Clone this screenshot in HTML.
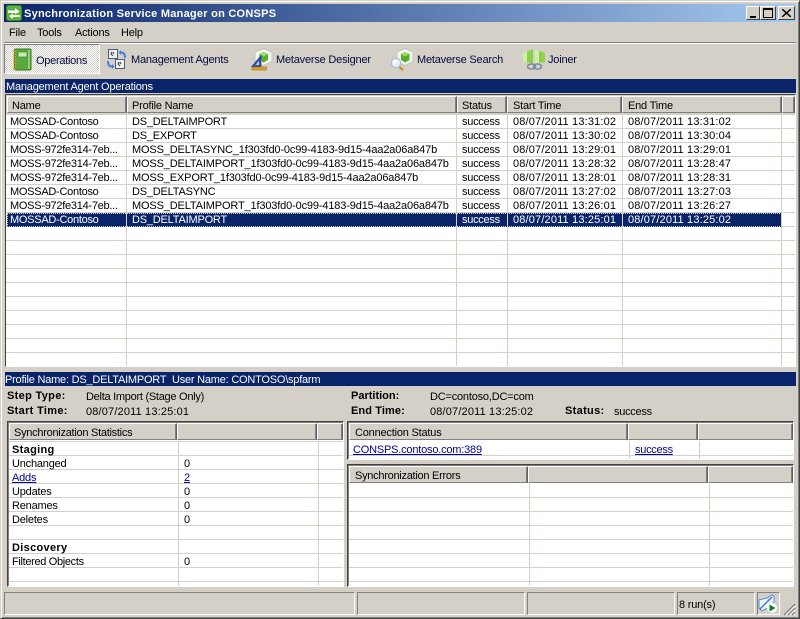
<!DOCTYPE html>
<html><head><meta charset="utf-8"><style>
html,body{margin:0;padding:0;width:800px;height:619px;overflow:hidden;background:#d4d0c8}
body{position:relative;font:11px/14px "Liberation Sans",sans-serif;color:#000;letter-spacing:-.2px}
div,span,a,svg{position:absolute;display:block}
.t,a{white-space:nowrap;height:14px}
a{color:#00009c;text-decoration:underline}
b{font-weight:bold;letter-spacing:.32px}
.d{letter-spacing:.16px}
.p{letter-spacing:-.15px}
.n{letter-spacing:-.27px}
.hd{background:#d4d0c8;border:1px solid;border-color:#fff #606060 #808080 #fff;box-shadow:inset -1px 0 0 #808080;box-sizing:border-box;height:17px}
.navy{background:#0a246a;color:#fff;height:14px;left:5px;width:791px;line-height:14px}
.sunk{box-sizing:border-box;border:1px solid;border-color:#404040 #fff #fff #404040;box-shadow:inset 1px 1px 0 #808080,1px 1px 0 #d4d0c8;background:#fff;overflow:hidden}
.v{width:1px;background:#d4d0c8;top:0;bottom:0}
.sb{box-sizing:border-box;border:1px solid;border-color:#808080 #fff #fff #808080;top:592px;height:23px}
.btn{top:6px;height:14px;box-sizing:border-box;background:#d4d0c8;border:1px solid;border-color:#fff #404040 #404040 #fff}
</style></head><body>
<div style="left:0;top:0;width:800px;height:619px;box-sizing:border-box;border:1px solid;border-color:#d4d0c8 #404040 #404040 #d4d0c8;box-shadow:inset 1px 1px 0 #fff,inset -1px -1px 0 #808080"></div>
<div style="left:4px;top:4px;width:792px;height:18px;background:linear-gradient(90deg,#0a246a,#a6caf0)"></div>
<svg style="left:6px;top:5px" width="16" height="16" viewBox="0 0 16 16"><rect x=".5" y=".5" width="15" height="15" rx="2" fill="#5cb040" stroke="#3a8a28"/><path d="M2 5.500h7V3l4.500 3.500L9 9.500V8H2z" fill="#fff"/><path d="M14 10H7V8.500L3 11l4 3v-2h7z" fill="#f0f8e0"/></svg>
<span class="t" style="left:24px;top:7px;color:#fff;font-weight:bold;letter-spacing:.25px">Synchronization Service Manager on CONSPS</span>
<div class="btn" style="left:746px;width:14px"><div style="left:3px;top:9px;width:6px;height:2px;background:#000"></div></div>
<div class="btn" style="left:760px;width:16px"><div style="left:2px;top:1px;width:10px;height:10px;box-sizing:border-box;border:1px solid #000;border-top-width:2px"></div></div>
<div class="btn" style="left:778px;width:17px"><svg style="left:3px;top:2px" width="9" height="8" viewBox="0 0 9 8"><path d="M0 0l9 8M9 0L0 8" stroke="#000" stroke-width="1.500"/></svg></div>

<span class="t" style="left:9px;top:26px">File</span>
<span class="t" style="left:37px;top:26px">Tools</span>
<span class="t" style="left:75px;top:26px">Actions</span>
<span class="t" style="left:121px;top:26px">Help</span>
<div style="left:4px;top:42px;width:792px;height:1px;background:#808080"></div>
<div style="left:4px;top:43px;width:792px;height:1px;background:#fff"></div>

<div style="left:4px;top:44px;width:96px;height:30px;box-sizing:border-box;border:1px solid;border-color:#808080 #fff #fff #808080;background:repeating-conic-gradient(#fff 0 25%,#d4d0c8 0 50%) 0 0/2px 2px"></div>
<svg style="left:12px;top:48px" width="20" height="23" viewBox="0 0 20 23"><rect x="2.500" y="1" width="16.500" height="21" rx="1.500" fill="#5aa83f" stroke="#2f7a22"/><rect x="16" y="2" width="2" height="19" fill="#90cc70"/><rect x="6" y="4" width="9" height="5" fill="#c8e6b0" stroke="#2f7a22" stroke-width=".6"/><path d="M1 3h3M1 6h3M1 9h3M1 12h3M1 15h3M1 18h3M1 21h3" stroke="#d9a520" stroke-width="1.200"/></svg>
<span class="t n" style="left:36px;top:54px;color:#000a40">Operations</span>

<svg style="left:106px;top:48px" width="21" height="23" viewBox="0 0 21 23"><rect x="2.500" y="1.500" width="9" height="9" fill="#eef0f4" stroke="#4a5a7a"/><rect x="9.500" y="11.500" width="9" height="9" fill="#eef0f4" stroke="#4a5a7a"/><path d="M5 4l1 1-1 1 2 2M7 4l1 2M12 14l1 1-1 1 2 2M14 14l1 2" stroke="#444" fill="none"/><path d="M15 2l-2.500 2.500L15 7V5.500c2 0 3 1 3 4.500h2c0-5-2-6.500-5-6.500z" fill="#3f7fd8"/><path d="M6 21l2.500-2.500L6 16v1.500c-2 0-3-1-3-4.500H1c0 5 2 6.500 5 6.500z" fill="#3f7fd8"/></svg>
<span class="t" style="left:131px;top:53px;color:#000a40">Management Agents</span>

<svg style="left:251px;top:48px" width="22" height="23" viewBox="0 0 22 23"><path d="M12.500 .5L21 4v9l-8.500 4.500L4 13V4z" fill="#f4f4f0" stroke="#b8b8b0" stroke-width=".7"/><path d="M12.500 4l4.500 2v6l-4.500 2.500L8.500 12V6z" fill="#58ac2c"/><path d="M12.500 4L17 6l-4.500 2.500L8.500 6z" fill="#a0dc64"/><path d="M.5 19L10 7.500V19z" fill="#2f55b8" stroke="#1b3580" stroke-width=".6"/><path d="M4.500 17L8 13v4z" fill="#d4d0c8"/><rect x="1" y="19" width="14.500" height="3" fill="#e0a020" stroke="#9a6a10" stroke-width=".5"/></svg>
<span class="t" style="left:276px;top:53px;color:#000a40">Metaverse Designer</span>

<svg style="left:391px;top:48px" width="24" height="23" viewBox="0 0 24 23"><path d="M14 .5L22 4v9l-8 4.500L6 13V4z" fill="#f4f4f0" stroke="#b8b8b0" stroke-width=".7"/><path d="M14 4l4.500 2v6L14 14.500 10 12V6z" fill="#58ac2c"/><path d="M14 4l4.500 2L14 8.500 10 6z" fill="#a0dc64"/><circle cx="5" cy="15" r="4.700" fill="#e4ecf6" stroke="#a8b4c4"/><circle cx="4" cy="13.500" r="2" fill="#fff"/><path d="M8.500 19l3.500 3" stroke="#d08a20" stroke-width="2.200"/></svg>
<span class="t" style="left:417px;top:53px;color:#000a40">Metaverse Search</span>

<svg style="left:523px;top:48px" width="24" height="23" viewBox="0 0 24 23"><path d="M0 5l10-4v14.500L0 14z" fill="#8ed04a"/><path d="M0 5l4-1.600v11.300L0 14z" fill="#cdf0a8"/><path d="M12 1l10 4v9l-10 1.500z" fill="#8ed04a"/><path d="M12 1l4 1.600v12.300l-4 .6z" fill="#cdf0a8"/><ellipse cx="8.500" cy="18.500" rx="4" ry="2.500" fill="none" stroke="#7a8aa4" stroke-width="1.600"/><ellipse cx="14.500" cy="18.500" rx="4" ry="2.500" fill="none" stroke="#7a8aa4" stroke-width="1.600"/></svg>
<span class="t" style="left:548px;top:53px;color:#000a40">Joiner</span>

<div class="navy" style="top:79px"><span class="t" style="left:1px;top:1px">Management Agent Operations</span></div>

<!-- main list -->
<div class="sunk" style="left:5px;top:94px;width:791px;height:273px">
  <div style="left:0;top:0;right:0;bottom:0;background:repeating-linear-gradient(180deg,#fff 0,#fff 13px,#d4d0c8 13px,#d4d0c8 14px);background-position:0 20px"></div>
  <div style="left:0;right:0;top:0;height:20px;background:#d4d0c8"></div>
</div>
<div class="hd" style="left:7px;top:96px;width:120px"></div><span class="t" style="left:12px;top:99px">Name</span>
<div class="hd" style="left:127px;top:96px;width:330px"></div><span class="t" style="left:132px;top:99px">Profile Name</span>
<div class="hd" style="left:457px;top:96px;width:50px"></div><span class="t" style="left:462px;top:99px">Status</span>
<div class="hd" style="left:507px;top:96px;width:115px"></div><span class="t" style="left:513px;top:99px">Start Time</span>
<div class="hd" style="left:622px;top:96px;width:160px"></div><span class="t" style="left:628px;top:99px">End Time</span>
<div class="hd" style="left:782px;top:96px;width:13px"></div>

<div style="left:7px;top:213px;width:775px;height:14px;background:#0a246a"></div>
<div style="left:7px;top:213px;width:775px;height:14px;box-sizing:border-box;border:1px dotted #d4d0c8"></div>
<div class="v" style="left:126px;top:113px;bottom:auto;height:253px"></div>
<div class="v" style="left:456px;top:113px;bottom:auto;height:253px"></div>
<div class="v" style="left:507px;top:113px;bottom:auto;height:253px"></div>
<div class="v" style="left:622px;top:113px;bottom:auto;height:253px"></div>
<div class="v" style="left:781px;top:113px;bottom:auto;height:253px"></div>

<span class="t n" style="left:10px;top:115px">MOSSAD-Contoso</span><span class="t" style="left:132px;top:115px">DS_DELTAIMPORT</span><span class="t n" style="left:462px;top:115px">success</span><span class="t d" style="left:513px;top:115px">08/07/2011 13:31:02</span><span class="t d" style="left:628px;top:115px">08/07/2011 13:31:02</span>
<span class="t n" style="left:10px;top:129px">MOSSAD-Contoso</span><span class="t" style="left:132px;top:129px">DS_EXPORT</span><span class="t n" style="left:462px;top:129px">success</span><span class="t d" style="left:513px;top:129px">08/07/2011 13:30:02</span><span class="t d" style="left:628px;top:129px">08/07/2011 13:30:04</span>
<span class="t n" style="left:10px;top:143px">MOSS-972fe314-7eb...</span><span class="t p" style="left:132px;top:143px">MOSS_DELTASYNC_1f303fd0-0c99-4183-9d15-4aa2a06a847b</span><span class="t n" style="left:462px;top:143px">success</span><span class="t d" style="left:513px;top:143px">08/07/2011 13:29:01</span><span class="t d" style="left:628px;top:143px">08/07/2011 13:29:01</span>
<span class="t n" style="left:10px;top:157px">MOSS-972fe314-7eb...</span><span class="t p" style="left:132px;top:157px">MOSS_DELTAIMPORT_1f303fd0-0c99-4183-9d15-4aa2a06a847b</span><span class="t n" style="left:462px;top:157px">success</span><span class="t d" style="left:513px;top:157px">08/07/2011 13:28:32</span><span class="t d" style="left:628px;top:157px">08/07/2011 13:28:47</span>
<span class="t n" style="left:10px;top:171px">MOSS-972fe314-7eb...</span><span class="t p" style="left:132px;top:171px">MOSS_EXPORT_1f303fd0-0c99-4183-9d15-4aa2a06a847b</span><span class="t n" style="left:462px;top:171px">success</span><span class="t d" style="left:513px;top:171px">08/07/2011 13:28:01</span><span class="t d" style="left:628px;top:171px">08/07/2011 13:28:31</span>
<span class="t n" style="left:10px;top:185px">MOSSAD-Contoso</span><span class="t" style="left:132px;top:185px">DS_DELTASYNC</span><span class="t n" style="left:462px;top:185px">success</span><span class="t d" style="left:513px;top:185px">08/07/2011 13:27:02</span><span class="t d" style="left:628px;top:185px">08/07/2011 13:27:03</span>
<span class="t n" style="left:10px;top:199px">MOSS-972fe314-7eb...</span><span class="t p" style="left:132px;top:199px">MOSS_DELTAIMPORT_1f303fd0-0c99-4183-9d15-4aa2a06a847b</span><span class="t n" style="left:462px;top:199px">success</span><span class="t d" style="left:513px;top:199px">08/07/2011 13:26:01</span><span class="t d" style="left:628px;top:199px">08/07/2011 13:26:27</span>
<span class="t n" style="left:10px;top:213px;color:#fff">MOSSAD-Contoso</span><span class="t" style="left:132px;top:213px;color:#fff">DS_DELTAIMPORT</span><span class="t n" style="left:462px;top:213px;color:#fff">success</span><span class="t d" style="left:513px;top:213px;color:#fff">08/07/2011 13:25:01</span><span class="t d" style="left:628px;top:213px;color:#fff">08/07/2011 13:25:02</span>

<div class="navy" style="top:372px"><span class="t" style="left:0;top:1px;letter-spacing:-.22px">Profile Name: DS_DELTAIMPORT&nbsp; User Name: CONTOSO\spfarm</span></div>
<b class="t" style="position:absolute;left:7px;top:389px">Step Type:</b>
<b class="t" style="position:absolute;left:7px;top:404px">Start Time:</b>
<span class="t n" style="left:86px;top:390px">Delta Import (Stage Only)</span>
<span class="t d" style="left:86px;top:405px">08/07/2011 13:25:01</span>
<b class="t" style="position:absolute;left:351px;top:389px;letter-spacing:0">Partition:</b>
<b class="t" style="position:absolute;left:351px;top:404px;letter-spacing:.1px">End Time:</b>
<span class="t" style="left:430px;top:390px">DC=contoso,DC=com</span>
<span class="t d" style="left:430px;top:405px">08/07/2011 13:25:02</span>
<b class="t" style="position:absolute;left:565px;top:404px">Status:</b>
<span class="t n" style="left:614px;top:405px">success</span>

<!-- stats -->
<div class="sunk" style="left:7px;top:421px;width:337px;height:166px"></div>
<div style="left:9px;top:441px;width:334px;height:145px;background:linear-gradient(180deg,#fff 13px,#d4d0c8 13px) 0 1px/100% 14px"></div>
<div class="hd" style="left:9px;top:423px;width:168px"></div><span class="t n" style="left:14px;top:426px">Synchronization Statistics</span>
<div class="hd" style="left:177px;top:423px;width:140px"></div>
<div class="hd" style="left:317px;top:423px;width:26px"></div>
<div class="v" style="left:178px;top:441px;bottom:auto;height:145px"></div>
<div class="v" style="left:318px;top:441px;bottom:auto;height:145px"></div>
<b class="t" style="position:absolute;left:12px;top:443px">Staging</b>
<span class="t" style="left:12px;top:457px">Unchanged</span><span class="t" style="left:184px;top:457px">0</span>
<a style="left:12px;top:471px">Adds</a><a style="left:184px;top:471px">2</a>
<span class="t" style="left:12px;top:485px">Updates</span><span class="t" style="left:184px;top:485px">0</span>
<span class="t" style="left:12px;top:499px">Renames</span><span class="t" style="left:184px;top:499px">0</span>
<span class="t" style="left:12px;top:513px">Deletes</span><span class="t" style="left:184px;top:513px">0</span>
<b class="t" style="position:absolute;left:12px;top:541px">Discovery</b>
<span class="t" style="left:12px;top:555px;letter-spacing:-.33px">Filtered Objects</span><span class="t" style="left:184px;top:555px">0</span>

<!-- connection -->
<div class="sunk" style="left:347px;top:421px;width:447px;height:39px"></div>
<div style="left:349px;top:441px;width:444px;height:18px;background:#fff"></div>
<div style="left:349px;top:455px;width:444px;height:1px;background:#d4d0c8"></div>
<div class="hd" style="left:349px;top:423px;width:279px"></div><span class="t" style="left:355px;top:426px">Connection Status</span>
<div class="hd" style="left:628px;top:423px;width:70px"></div>
<div class="hd" style="left:698px;top:423px;width:95px"></div>
<div class="v" style="left:629px;top:441px;bottom:auto;height:18px"></div>
<div class="v" style="left:699px;top:441px;bottom:auto;height:18px"></div>
<a style="left:353px;top:443px">CONSPS.contoso.com:389</a>
<a class="n" style="left:635px;top:443px">success</a>

<!-- errors -->
<div class="sunk" style="left:347px;top:464px;width:447px;height:123px"></div>
<div style="left:349px;top:484px;width:444px;height:102px;background:linear-gradient(180deg,#fff 13px,#d4d0c8 13px) 0 0/100% 14px"></div>
<div class="hd" style="left:349px;top:466px;width:179px"></div><span class="t n" style="left:355px;top:469px">Synchronization Errors</span>
<div class="hd" style="left:528px;top:466px;width:180px"></div>
<div class="hd" style="left:708px;top:466px;width:85px"></div>
<div class="v" style="left:529px;top:484px;bottom:auto;height:102px"></div>
<div class="v" style="left:709px;top:484px;bottom:auto;height:102px"></div>

<!-- status bar -->
<div class="sb" style="left:4px;width:351px"></div>
<div class="sb" style="left:357px;width:168px"></div>
<div class="sb" style="left:527px;width:148px"></div>
<div class="sb" style="left:677px;width:78px"></div>
<div class="sb" style="left:757px;width:23px"></div>
<span class="t" style="left:679px;top:598px">8 run(s)</span>
<svg style="left:758px;top:594px" width="20" height="20" viewBox="0 0 20 20"><path d="M1 6l8-2 5-3 2 1v6l-3 4-9 5-3-3z" fill="#eef4fb" stroke="#5a8ad0"/><path d="M2 15L14 3" stroke="#3a7ad8" stroke-width="1.500"/><circle cx="14" cy="14" r="5" fill="#fff"/><path d="M11.500 10.500l6 3.500-6 3.500z" fill="#0a8020"/></svg>
<svg style="left:783px;top:603px" width="13" height="13" viewBox="0 0 13 13"><path d="M12 1L1 12M12 5l-7 7M12 9l-3 3" stroke="#808080" stroke-width="1.300"/><path d="M12 3L3 12M12 7l-5 5M12 11l-1 1" stroke="#fff"/></svg>
</body></html>
